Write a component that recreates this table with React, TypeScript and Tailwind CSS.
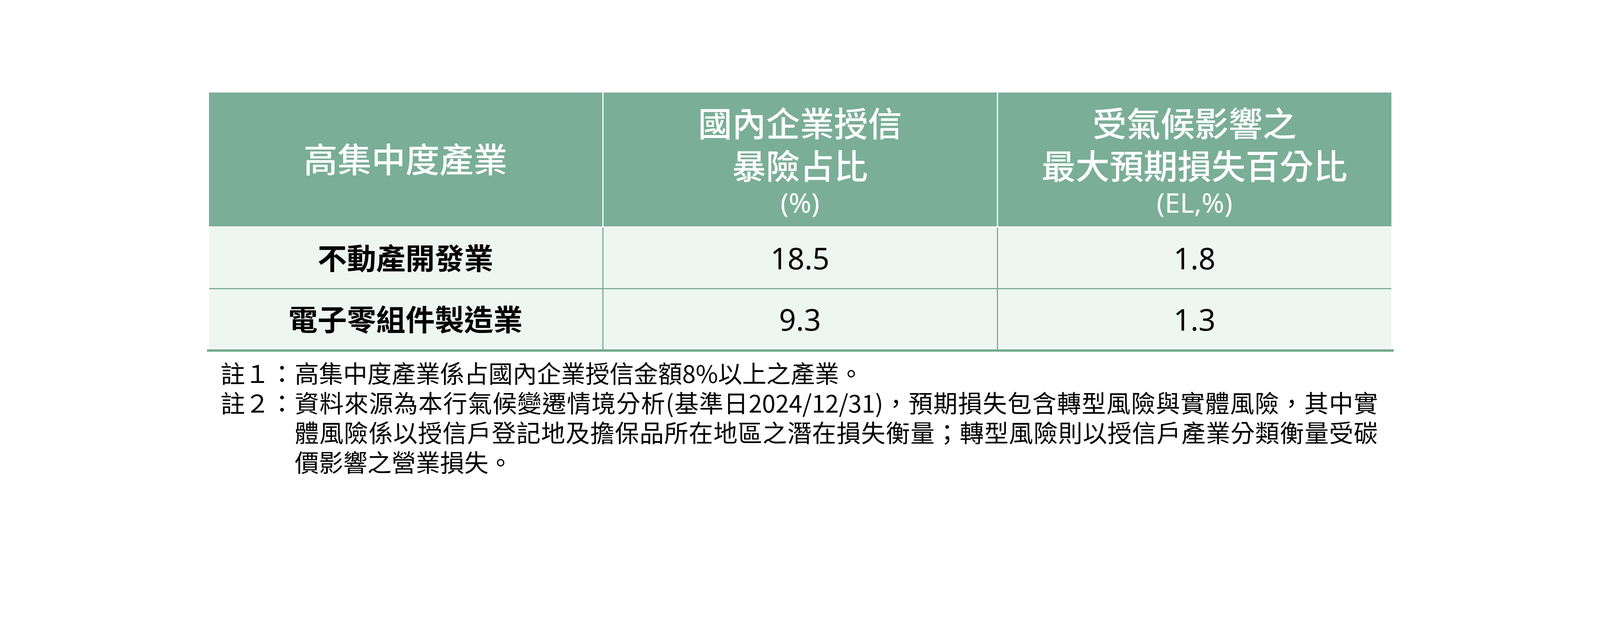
const rows = [
  { name: '不動產開發業', share: '18.5', el: '1.8' },
  { name: '電子零組件製造業', share: '9.3', el: '1.3' },
];

export default function App() {
  return (
    <div className="w-full min-h-screen bg-white pt-[237px]">
      <div className="w-[3027px] mx-auto">
        {/* Header */}
        <div className="grid grid-cols-3 gap-[3px] bg-white text-white h-[343px] text-center font-medium font-['Noto_Sans','Noto_Sans_CJK_TC',sans-serif]">
          <div className="bg-[#7aae97] flex items-center justify-center">
            <div className="text-[87px] leading-[109px]">高集中度產業</div>
          </div>
          <div className="bg-[#7aae97] flex flex-col items-center justify-center">
            <div className="text-[87px] leading-[109px]">國內企業授信</div>
            <div className="text-[87px] leading-[109px]">暴險占比</div>
            <div className="text-[70px] leading-[76px] font-normal">(%)</div>
          </div>
          <div className="bg-[#7aae97] flex flex-col items-center justify-center">
            <div className="text-[87px] leading-[109px]">受氣候影響之</div>
            <div className="text-[87px] leading-[109px]">最大預期損失百分比</div>
            <div className="text-[70px] leading-[76px] font-normal">(EL,%)</div>
          </div>
        </div>

        {/* Body */}
        <div className="mt-[3px] grid grid-cols-3 gap-[3px] bg-[#7aae97] text-black font-['Noto_Sans','Noto_Sans_CJK_TC',sans-serif]">
          {rows.map((r, i) => (
            <div key={r.name} className="contents">
              <div
                className={`bg-[#eef6f2] flex items-center justify-center font-bold text-[75px] leading-[96px] ${
                  i === 0 ? 'h-[155px]' : 'h-[154px]'
                }`}
              >
                {r.name}
              </div>
              <div className="bg-[#eef6f2] flex items-center justify-center text-[76px] leading-[96px]">
                {r.share}
              </div>
              <div className="bg-[#eef6f2] flex items-center justify-center text-[76px] leading-[96px]">
                {r.el}
              </div>
            </div>
          ))}
        </div>
        <div className="h-[6px] bg-[#74a98f] ml-[-5px] mr-[-6px]" />

        {/* Notes */}
        <div className="mt-[15px] ml-[30px] w-[2963px] text-black text-[62px] leading-[76px] font-['Noto_Sans_CJK_TC','Noto_Sans_CJK_JP',sans-serif]">
          <div className="flex">
            <div className="w-[190px] shrink-0 text-[63px]">註１：</div>
            <div className="flex-1">高集中度產業係占國內企業授信金額8%以上之產業。</div>
          </div>
          <div className="flex">
            <div className="w-[190px] shrink-0 text-[63px]">註２：</div>
            <div className="flex-1">
              <div className="text-justify [text-align-last:justify]">
                資料來源為本行氣候變遷情境分析(基準日2024/12/31)，預期損失包含轉型風險與實體風險，其中實
              </div>
              <div className="text-justify [text-align-last:justify]">
                體風險係以授信戶登記地及擔保品所在地區之潛在損失衡量；轉型風險則以授信戶產業分類衡量受碳
              </div>
              <div>價影響之營業損失。</div>
            </div>
          </div>
        </div>
      </div>
    </div>
  );
}
